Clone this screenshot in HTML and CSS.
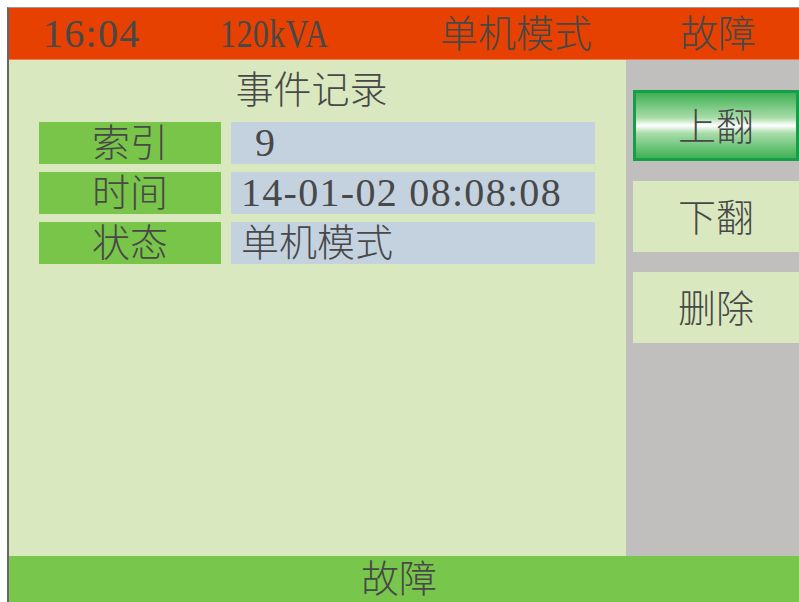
FILE: index.html
```html
<!DOCTYPE html>
<html lang="zh-CN">
<head>
  <meta charset="UTF-8">
  <meta name="viewport" content="width=device-width, initial-scale=1.0">
  <title>事件记录</title>
  <link rel="stylesheet" href="styles.css">
</head>
<body>
  <div class="screen">
    <div class="topbar">
      <span class="num">16:04</span>
      <span><span class="num narrow">120kVA</span></span>
      <span>单机模式</span>
      <span>故障</span>
    </div>

    <div class="main">
      <div class="panel">
        <h1 class="title">事件记录</h1>
        <div class="rows">
          <div class="label">索引</div>
          <div class="value num"><span class="idx">9</span></div>
          <div class="label">时间</div>
          <div class="value num">14-01-02 08:08:08</div>
          <div class="label">状态</div>
          <div class="value">单机模式</div>
        </div>
      </div>

      <div class="side">
        <button class="btn active">上翻</button>
        <button class="btn">下翻</button>
        <button class="btn">删除</button>
      </div>
    </div>

    <div class="footer">故障</div>
  </div>
</body>
</html>
```

FILE: styles.css
```css
body { margin: 0; background: #fff; font-family: "Liberation Serif", "Noto Sans CJK SC", serif; color: #484848; overflow: hidden; }
.screen { margin: 7px 0 0 7px; height: 595px; border-top: 1px solid #9a9a9a; border-left: 2px solid #666; display: flex; flex-direction: column; }

.topbar { height: 51px; background: #e64100; display: grid; grid-template-columns: 177px 220px 240px auto; align-items: center; padding-left: 34px; font-size: 38px; line-height: 44px; font-weight: 300; border-bottom: 1px solid #f07a4a; }
.num { font-size: 40px; letter-spacing: 1.3px; }
.narrow { display: inline-block; letter-spacing: 0.5px; transform: scaleX(0.8); transform-origin: left center; }

.main { flex: 1; display: flex; }
.panel { width: 587px; background: #d9e8bf; padding: 8px 0 0 30px; }
.title { margin: 0 0 10px; font-size: 38px; font-weight: 300; line-height: 44px; text-align: center; padding-right: 42px; }

.rows { display: grid; grid-template-columns: 182px 364px; column-gap: 10px; row-gap: 8px; }
.label { height: 42px; background: #78c54a; text-align: center; font-size: 38px; line-height: 42px; font-weight: 300; }
.value { height: 42px; background: #c4d2df; padding-left: 10px; font-size: 38px; line-height: 42px; font-weight: 300; }
.value.num { font-size: 40px; }
.idx { margin-left: 14px; }

.side { flex: 1; background: #c0bfbd; padding: 30px 0 0 7px; display: flex; flex-direction: column; gap: 20px; }
.btn { height: 71px; border: 0; background: #d9e8bf; font-family: inherit; font-size: 38px; font-weight: 300; color: #484848; padding: 0 0 4px; }
.btn.active { border: 3px solid #14a048; background: linear-gradient(#3fb154, #a8dca8 38%, #fff 50%, #a8dca8 62%, #3fb154); }

.footer { height: 47px; background: #78c64b; text-align: center; font-size: 38px; line-height: 47px; font-weight: 300; padding-right: 10px; }
```
